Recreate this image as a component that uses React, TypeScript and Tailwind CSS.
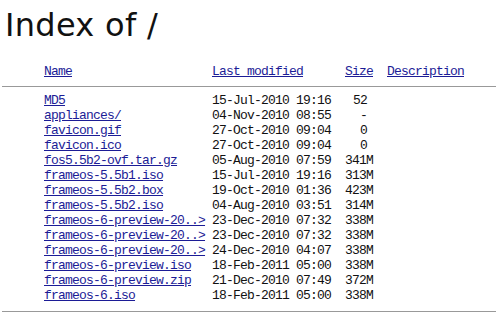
const files = [
  { name: "MD5", date: "15-Jul-2010 19:16", size: "52" },
  { name: "appliances/", date: "04-Nov-2010 08:55", size: "-" },
  { name: "favicon.gif", date: "27-Oct-2010 09:04", size: "0" },
  { name: "favicon.ico", date: "27-Oct-2010 09:04", size: "0" },
  { name: "fos5.5b2-ovf.tar.gz", date: "05-Aug-2010 07:59", size: "341M" },
  { name: "frameos-5.5b1.iso", date: "15-Jul-2010 19:16", size: "313M" },
  { name: "frameos-5.5b2.box", date: "19-Oct-2010 01:36", size: "423M" },
  { name: "frameos-5.5b2.iso", date: "04-Aug-2010 03:51", size: "314M" },
  { name: "frameos-6-preview-20..>", date: "23-Dec-2010 07:32", size: "338M" },
  { name: "frameos-6-preview-20..>", date: "23-Dec-2010 07:32", size: "338M" },
  { name: "frameos-6-preview-20..>", date: "24-Dec-2010 04:07", size: "338M" },
  { name: "frameos-6-preview.iso", date: "18-Feb-2011 05:00", size: "338M" },
  { name: "frameos-6-preview.zip", date: "21-Dec-2010 07:49", size: "372M" },
  { name: "frameos-6.iso", date: "18-Feb-2011 05:00", size: "338M" },
]

const mono = "font-['Liberation_Mono',monospace] text-[13px] tracking-[-0.8px] leading-[15px]"

export default function App() {
  return (
    <div className="w-[498px] h-[321px] bg-white text-[#111] px-[2px] pt-[5px] overflow-hidden">
      <h1 className="pl-[3px] text-[32px] leading-[40px] font-normal tracking-[0.3px] font-['DejaVu_Sans',sans-serif]">
        Index of /
      </h1>

      <div className={`${mono} mt-[19px] pl-[42px] grid grid-cols-[168px_133px_42px_1fr]`}>
        <a href="#" className="underline text-[#1c1c96] justify-self-start">Name</a>
        <a href="#" className="underline text-[#1c1c96] justify-self-start">Last modified</a>
        <a href="#" className="underline text-[#1c1c96] justify-self-start">Size</a>
        <a href="#" className="underline text-[#1c1c96] justify-self-start">Description</a>
      </div>

      <hr className="mt-[7px] border-0 border-t border-[#999]" />

      <div className={`${mono} mt-[6px] pl-[42px] grid grid-cols-[168px_133px_22px_1fr]`}>
        {files.map((f, i) => (
          <div key={i} className="contents">
            <a href="#" className="underline text-[#1c1c96] justify-self-start whitespace-pre">
              {f.name}
            </a>
            <span className="whitespace-pre">{f.date}</span>
            <span className="text-right">{f.size}</span>
            <span />
          </div>
        ))}
      </div>

      <hr className="mt-[8px] border-0 border-t border-[#999]" />
    </div>
  )
}
